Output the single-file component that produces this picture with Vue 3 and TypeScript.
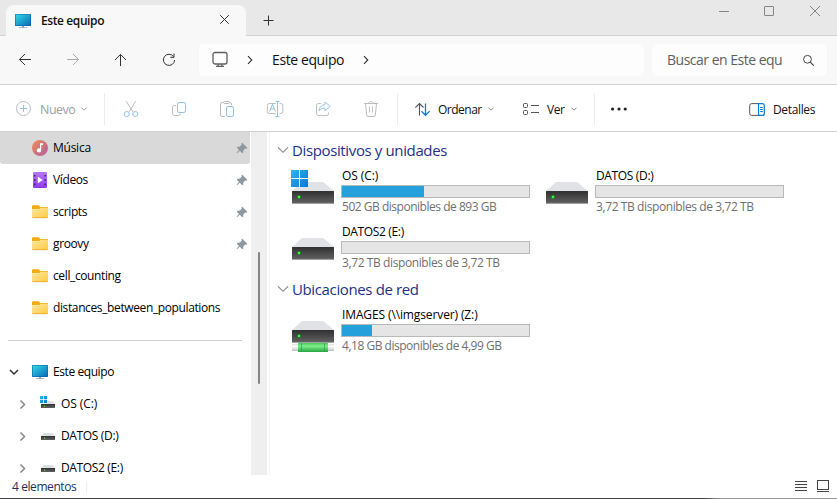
<script setup lang="ts">
interface Place { name: string; kind: 'music' | 'video' | 'folder'; pinned: boolean }
interface Drive { name: string; info: string; used: number; kind: 'os' | 'disk' | 'net' }
interface Group { title: string; drives: Drive[] }

const places: Place[] = [
  { name: 'Música', kind: 'music', pinned: true },
  { name: 'Vídeos', kind: 'video', pinned: true },
  { name: 'scripts', kind: 'folder', pinned: true },
  { name: 'groovy', kind: 'folder', pinned: true },
  { name: 'cell_counting', kind: 'folder', pinned: false },
  { name: 'distances_between_populations', kind: 'folder', pinned: false },
]
const tree = [
  { name: 'OS (C:)', os: true },
  { name: 'DATOS (D:)', os: false },
  { name: 'DATOS2 (E:)', os: false },
]
const groups: Group[] = [
  {
    title: 'Dispositivos y unidades',
    drives: [
      { name: 'OS (C:)', info: '502 GB disponibles de 893 GB', used: 43.8, kind: 'os' },
      { name: 'DATOS (D:)', info: '3,72 TB disponibles de 3,72 TB', used: 0, kind: 'disk' },
      { name: 'DATOS2 (E:)', info: '3,72 TB disponibles de 3,72 TB', used: 0, kind: 'disk' },
    ],
  },
  {
    title: 'Ubicaciones de red',
    drives: [{ name: 'IMAGES (\\\\imgserver) (Z:)', info: '4,18 GB disponibles de 4,99 GB', used: 16.2, kind: 'net' }],
  },
]
</script>

<template>
  <div class="window">
    <svg class="defs" width="0" height="0">
      <defs>
        <linearGradient id="screen" x1="0" y1="0" x2="1" y2="1"><stop offset="0" stop-color="#32dbe5" /><stop offset="1" stop-color="#0869b9" /></linearGradient>
        <linearGradient id="folder" x1="0" y1="0" x2="1" y2="1"><stop offset="0" stop-color="#ffe8a2" /><stop offset="1" stop-color="#ffca3d" /></linearGradient>
        <linearGradient id="music" x1="0" y1="0" x2="1" y2="1"><stop offset="0" stop-color="#f08a50" /><stop offset="1" stop-color="#ae62a5" /></linearGradient>
        <linearGradient id="video" x1="0" y1="0" x2="0" y2="1"><stop offset="0" stop-color="#b779ef" /><stop offset="1" stop-color="#8c3ce8" /></linearGradient>
        <linearGradient id="front" x1="0" y1="0" x2="0" y2="1"><stop offset="0" stop-color="#303030" /><stop offset="1" stop-color="#626262" /></linearGradient>
        <linearGradient id="win" x1="0" y1="0" x2="1" y2="1"><stop offset="0" stop-color="#30b3ee" /><stop offset="1" stop-color="#0878d3" /></linearGradient>
        <linearGradient id="pipe" x1="0" y1="0" x2="0" y2="1"><stop offset="0" stop-color="#47ca5b" /><stop offset=".35" stop-color="#7fee8a" /><stop offset="1" stop-color="#25a542" /></linearGradient>
        <linearGradient id="cap" x1="0" y1="0" x2="0" y2="1"><stop offset="0" stop-color="#dedede" /><stop offset=".35" stop-color="#fff" /><stop offset="1" stop-color="#bdbdbd" /></linearGradient>
        <symbol id="monitor" viewBox="0 0 16 16"><path d="M7 12h2v3H7zM4 14.2h8v.8H4z" fill="#9aa6ae" /><rect y="1" width="16" height="12" rx=".7" fill="#0b65a6" /><rect x=".6" y="1.5" width="14.8" height="10.9" fill="url(#screen)" /></symbol>
        <symbol id="pin" viewBox="0 0 12 12"><path d="M6.2.7 11.3 5.8 10.6 6.8 9.3 6.5 7.3 8.5 7.2 10.4 6.2 11.2 3.8 8.7 1 11.2.5 10.8 3 7.9.8 5.7 1.7 4.7 3.6 4.8 5.6 2.8 5.3 1.4z" fill="#8c979f" /></symbol>
        <symbol id="small-chevron" viewBox="0 0 8 8"><path d="M1.5 2.7 4 5.2 6.5 2.7" fill="none" stroke="currentColor" /></symbol>
      </defs>
    </svg>

    <header class="titlebar">
      <div class="tab">
        <svg width="16" height="16"><use href="#monitor" /></svg>
        <span class="tab-title">Este equipo</span>
        <svg class="tab-close" width="11" height="11" viewBox="0 0 11 11"><path d="M1.2 1.2 9.8 9.8M9.8 1.2 1.2 9.8" fill="none" stroke="#333" /></svg>
      </div>
      <svg class="new-tab" width="11" height="11" viewBox="0 0 11 11"><path d="M5.5.5v10M.5 5.5h10" stroke="#333" /></svg>
      <div class="caption">
        <svg width="12" height="12" viewBox="0 0 12 12"><path d="M1 6.5h10" stroke="#858585" /></svg>
        <svg width="12" height="12" viewBox="0 0 12 12"><rect x="1.5" y="1.5" width="9" height="9" rx=".5" fill="none" stroke="#858585" /></svg>
        <svg width="12" height="12" viewBox="0 0 12 12"><path d="m1 1 10 10M11 1 1 11" stroke="#858585" /></svg>
      </div>
    </header>

    <nav class="navbar">
      <div class="nav-buttons">
        <svg width="16" height="16" viewBox="0 0 16 16"><path d="M14 7.5H2.5M8 2 2.4 7.5 8 13" /></svg>
        <svg class="faded" width="16" height="16" viewBox="0 0 16 16"><path d="M2 7.5h11.5M8 2l5.6 5.5L8 13" /></svg>
        <svg width="16" height="16" viewBox="0 0 16 16"><path d="M7.5 14V2.5M2 8l5.5-5.6L13 8" /></svg>
        <svg width="16" height="16" viewBox="0 0 16 16"><path d="M12.5 4.5A5.6 5.6 0 1 0 13.6 8M13 1.5v3.8H9.3" /></svg>
      </div>
      <div class="address">
        <svg width="18" height="18" viewBox="0 0 18 18" fill="none" stroke="#5f5f5f" stroke-width="1.3"><rect x="2" y="1.5" width="14" height="11.5" rx="2" /><path d="M7.2 13.2v2M10.8 13.2v2M5 15.3h8" /></svg>
        <svg class="crumb-arrow" width="8" height="10" viewBox="0 0 8 10"><path d="m2 1.2 3.8 3.8L2 8.8" /></svg>
        <span class="crumb">Este equipo</span>
        <svg width="8" height="10" viewBox="0 0 8 10"><path d="m2 1.2 3.8 3.8L2 8.8" fill="none" stroke="#333" stroke-width="1.1" /></svg>
      </div>
      <div class="search">
        <span>Buscar en Este equ</span>
        <svg width="13" height="13" viewBox="0 0 13 13" fill="none" stroke="#444"><circle cx="5.5" cy="5.3" r="3.9" /><path d="m8.3 8.2 3.4 3.4" stroke-width="1.2" /></svg>
      </div>
    </nav>

    <div class="toolbar">
      <div class="new-item">
        <svg width="16" height="16" viewBox="0 0 16 16" fill="none"><circle cx="7.5" cy="7.5" r="7" stroke="#bdbdbd" /><path d="M7.5 4v7M4 7.5h7" stroke="#91c2e9" /></svg>
        <span>Nuevo</span>
        <svg width="8" height="8"><use href="#small-chevron" /></svg>
      </div>
      <div class="actions">
        <svg width="18" height="18" viewBox="0 0 18 18" fill="none"><path d="m4.2 1.2 7 11M13.8 1.2l-7 11" stroke="#bdbdbd" /><circle cx="4.7" cy="14" r="2.5" stroke="#91c2e9" /><circle cx="13.3" cy="14" r="2.5" stroke="#91c2e9" /></svg>
        <svg width="18" height="18" viewBox="-1 0 18 18" fill="none"><path d="M5 5.5H3.5a2 2 0 0 0-2 2v6a2 2 0 0 0 2 2h4a2 2 0 0 0 2-1.8" stroke="#bdbdbd" /><rect x="6.5" y="2.5" width="8" height="10" rx="1.7" stroke="#91c2e9" /></svg>
        <svg width="18" height="18" viewBox="-1 0 18 18" fill="none"><path d="M6 16.5H3A1.5 1.5 0 0 1 1.5 15V4A1.5 1.5 0 0 1 3 2.5h1.5m6 0H11A1.5 1.5 0 0 1 12.5 4v1" stroke="#bdbdbd" /><path d="M5.3 1.5h4.4l.8.7v.7l-.8.6H5.3l-.8-.6v-.7z" stroke="#bdbdbd" /><rect x="7.5" y="6.5" width="7" height="10" rx="1.5" stroke="#91c2e9" /></svg>
        <svg width="18" height="18" viewBox="0 0 18 18" fill="none"><path d="M9.5 3.5H3.3A2 2 0 0 0 1.3 5.5v6a2 2 0 0 0 2 2h6.2M13.5 3.5h1.3a2 2 0 0 1 2 2v6a2 2 0 0 1-2 2h-1.3" stroke="#bdbdbd" /><path d="M9.5 1.5h4M11.5 1.5v15M9.5 16.5h4M3.5 11.5l3-7 3 7M4.6 9h3.8" stroke="#91c2e9" /></svg>
        <svg width="18" height="18" viewBox="-1 0 18 18" fill="none"><path d="M6 3.5H3.5a2 2 0 0 0-2 2v8a2 2 0 0 0 2 2h8a2 2 0 0 0 2-2v-1" stroke="#bdbdbd" /><path d="m10 2 5.2 4.4-5.2 4.4V8.2C7.2 8 5.4 8.9 4 11 4.2 7.3 6.2 5 10 4.7z" stroke="#91c2e9" /></svg>
        <svg width="18" height="18" viewBox="0 0 18 18" fill="none" stroke="#bdbdbd"><path d="M2 3.5h14M6.7 3.5c0-2.6 4.6-2.6 4.6 0M3.5 3.5l1.2 11.9q.1 1.1 1.2 1.1h6.2q1.1 0 1.2-1.1l1.2-11.9M7.5 6.5v6M10.5 6.5v6" /></svg>
      </div>
      <div class="sort">
        <svg width="17" height="15" viewBox="0 0 17 15" fill="none"><path d="M5.5 13.5v-12M1.3 5.7l4.2-4.2 4 4" stroke="#555" stroke-width="1.1" /><path d="M11.5 1.5v12M7.5 9.3l4 4 4.2-4.2" stroke="#1579ce" stroke-width="1.3" /></svg>
        <span class="sort-label">Ordenar</span>
        <svg width="8" height="8"><use href="#small-chevron" /></svg>
        <svg class="view-icon" width="18" height="14" viewBox="0 0 18 14" fill="none" stroke="#555"><rect x="1.5" y="1.5" width="4" height="4" rx="1" /><rect x="1.5" y="8.5" width="4" height="4" rx="1" /><path d="M9 3.5h8M9 10.5h8" /></svg>
        <span class="view-label">Ver</span>
        <svg width="8" height="8"><use href="#small-chevron" /></svg>
      </div>
      <svg class="more" width="18" height="6" viewBox="0 0 18 6" fill="#222"><circle cx="2.6" cy="3" r="1.6" /><circle cx="9" cy="3" r="1.6" /><circle cx="15.2" cy="3" r="1.6" /></svg>
      <div class="details">
        <svg width="16" height="13" viewBox="0 0 16 13" fill="none"><path d="M9.5.6H2.7a2 2 0 0 0-2 2v7.8a2 2 0 0 0 2 2h6.8" stroke="#555" /><path d="M9.5.6h3.8a2 2 0 0 1 2 2v7.8a2 2 0 0 1-2 2H9.5z" stroke="#087bd4" stroke-width="1.2" /><path d="M11.2 4.5h2.6M11.2 6.5h2.6M11.2 8.5h2.6" stroke="#087bd4" /></svg>
        <span>Detalles</span>
      </div>
    </div>

    <div class="body">
      <aside class="sidebar">
        <div v-for="(p, i) in places" :key="p.name" class="place" :class="{ selected: i === 0 }">
          <svg v-if="p.kind === 'music'" width="16" height="16" viewBox="0 0 16 16"><circle cx="8" cy="8" r="8" fill="url(#music)" /><path d="M8 3.2h3v1.9H9.2v5.3a2.2 2 0 1 1-1.2-1.8z" fill="#fff" /></svg>
          <svg v-else-if="p.kind === 'video'" width="16" height="16" viewBox="0 0 16 16"><rect x="1" width="14" height="16" rx="1" fill="url(#video)" /><path d="M2 3h1.5v1.5H2zM2 7.3h1.5v1.5H2zM2 11.6h1.5v1.5H2zM12.5 3H14v1.5h-1.5zM12.5 7.3H14v1.5h-1.5zM12.5 11.6H14v1.5h-1.5z" fill="#402064" /><path d="m5.8 4.7 5 3.3-5 3.3z" fill="#fff" /></svg>
          <svg v-else width="16" height="16" viewBox="0 0 16 16"><path d="M0 2q0-.8.8-.8h6.1L8.2 3H16v2H0z" fill="#f3ad0b" /><path d="M0 5.3h7l1.4-1.5H16V13q0 1-1 1H1q-1 0-1-1z" fill="url(#folder)" /><path d="M.3 13.7h15.4" stroke="#d99b18" stroke-width=".6" /></svg>
          <span class="place-name">{{ p.name }}</span>
          <svg v-if="p.pinned" class="pin" width="12" height="12"><use href="#pin" /></svg>
        </div>
        <div class="separator"></div>
        <div class="tree-root">
          <svg width="12" height="12" viewBox="0 0 12 12"><path d="m2 4 4 4 4-4" fill="none" stroke="#333" stroke-width="1.5" /></svg>
          <svg class="root-icon" width="16" height="16"><use href="#monitor" /></svg>
          <span>Este equipo</span>
        </div>
        <div v-for="t in tree" :key="t.name" class="tree-item">
          <svg width="12" height="12" viewBox="0 0 12 12"><path d="m4.5 2.5 4 4-4 4" fill="none" stroke="#858585" stroke-width="1.5" /></svg>
          <svg class="tree-icon" width="16" height="16" viewBox="0 0 16 16"><path d="M4 5h8l3 3H1z" fill="#dedfe2" /><path d="M1 8h14v4H1z" fill="url(#front)" /><path d="M4 9.5h1.2v1.2H4z" fill="#47e04b" /><path v-if="t.os" d="M0 0h7.5v7.5H0z" fill="#fff" /><path v-if="t.os" d="M0 0h3.2v3.2H0zM3.9 0h3.2v3.2H3.9zM0 3.9h3.2v3.2H0zM3.9 3.9h3.2v3.2H3.9z" fill="url(#win)" /></svg>
          <span :class="{ wide: t.os }">{{ t.name }}</span>
        </div>
      </aside>
      <div class="scrollbar"><div class="thumb"></div></div>
      <main class="content">
        <section v-for="g in groups" :key="g.title">
          <h2><svg width="12" height="12" viewBox="0 0 12 12"><path d="m1 3.3 5 5 5-5" fill="none" stroke="#858585" stroke-width="1.1" /></svg><span>{{ g.title }}</span></h2>
          <div class="tiles">
            <div v-for="d in g.drives" :key="d.name" class="tile">
              <svg class="drive-icon" width="44" height="48" viewBox="0 0 44 48">
                <path d="M11 14h21l11 9H1z" fill="#e0e2e6" /><rect x="1" y="23" width="42" height="12.5" rx=".5" fill="url(#front)" /><path d="M1 35.4h42" stroke="#999" stroke-width=".8" />
                <circle cx="8" cy="29" r="2" fill="#158d28" /><circle cx="8" cy="29" r="1.2" fill="#45f047" />
                <g v-if="d.kind === 'os'"><path d="M0 2h17v17H0z" fill="#f8fcff" /><path d="M0 2h8v8H0zM9 2h8v8H9zM0 11h8v8H0zM9 11h8v8H9z" fill="url(#win)" /></g>
                <g v-if="d.kind === 'net'"><rect x="1" y="37" width="42" height="7" fill="url(#cap)" /><rect x="7" y="36" width="30" height="9" fill="url(#pipe)" /><path d="M10.5 36v9M33.5 36v9" stroke="#239b3a" stroke-width=".6" /></g>
              </svg>
              <div class="drive-info">
                <span class="drive-name" :class="d.kind">{{ d.name }}</span>
                <div class="meter"><div v-if="d.used" class="used" :style="{ width: d.used + '%' }"></div></div>
                <span class="drive-space" :class="d.kind">{{ d.info }}</span>
              </div>
            </div>
          </div>
        </section>
      </main>
    </div>
    <footer class="status">
      <span>4 elementos</span><i></i>
      <svg class="modes" width="38" height="14" viewBox="0 0 38 14" fill="none" stroke="#444"><path d="M0 1.5h12M0 4.5h12M0 7.5h12M0 10.5h12" /><rect x="22.5" y=".5" width="11" height="9" /><path d="M22 11.5h12" /></svg>
    </footer>
  </div>
</template>

<style>
body { background: #fff; }
</style>
<style scoped>
* { box-sizing: border-box; }
svg { display: block; flex: none; }
.window { width: 837px; height: 499px; overflow: hidden; display: flex; flex-direction: column; font: 12px/16px "Open Sans", "Noto Sans", sans-serif; color: #111; letter-spacing: -.35px; white-space: nowrap; background: #fff; }
.defs { height: 0; }
.titlebar { height: 36px; flex: none; display: flex; background: linear-gradient(#d3d3d3, #d3d3d3) 0 35px / 100% 1px no-repeat #e8e8e8; }
.tab { margin: 5px 0 0 6px; width: 240px; height: 31px; background: #f8f8f8; border-radius: 8px 8px 0 0; padding: 0 16px 0 9px; display: flex; align-items: center; }
.tab-title { margin-left: 10px; font-weight: 600; letter-spacing: -.4px; }
.tab-close { margin-left: auto; position: relative; top: -1px; }
.new-tab { margin: 15px 0 0 17px; }
.caption { margin: 5px 16px 0 auto; display: flex; gap: 33px; }
.caption svg:last-child { margin-left: 1px; }
.navbar { height: 49px; flex: none; background: #f8f8f8; border-bottom: 1px solid #d1d1d1; display: flex; align-items: center; }
.nav-buttons { width: 199px; padding-left: 17px; display: flex; gap: 32px; fill: none; stroke: #333; stroke-width: 1; }
.faded { stroke: #aaa; }
.address { width: 445px; height: 32px; border-radius: 5px; background: #fdfdfd; padding-left: 12px; display: flex; align-items: center; font-size: 14px; }
.crumb-arrow { margin-left: 17px; fill: none; stroke: #333; stroke-width: 1.1; }
.crumb { width: 73px; margin: 0 17px 0 18px; letter-spacing: -.4px; }
.search { width: 175px; height: 32px; margin-left: 8px; border-radius: 5px; background: #fdfdfd; padding: 0 12px 0 15px; display: flex; align-items: center; justify-content: space-between; color: #606060; font-size: 14px; letter-spacing: -.5px; }
.toolbar { height: 47px; flex: none; border-bottom: 1px solid #d1d1d1; display: flex; align-items: center; padding-top: 2px; }
.new-item { width: 105px; height: 32px; padding-left: 16px; border-right: 1px solid #ececec; display: flex; align-items: center; color: #a0a0a0; }
.new-item span { width: 35px; margin: 0 5px 0 8px; font-size: 12.5px; letter-spacing: -.5px; position: relative; top: 1px; }
.actions { width: 293px; height: 32px; display: flex; align-items: center; gap: 30px; padding-left: 17px; border-right: 1px solid #ececec; }
.sort { width: 197px; height: 32px; display: flex; align-items: center; padding-left: 16px; border-right: 1px solid #ececec; }
.sort > svg:nth-of-type(2), .sort > svg:last-child { color: #888; }
.sort-label, .view-label, .details span { position: relative; top: 1px; }
.sort-label { width: 44px; margin: 0 5px 0 7px; letter-spacing: -.5px; }
.view-icon { margin-left: 27px; }
.view-label { width: 18px; margin: 0 5px 0 7px; letter-spacing: -.5px; }
.more { margin-left: 15px; }
.details { margin-left: auto; padding-right: 21px; display: flex; align-items: center; }
.details span { width: 43px; margin-left: 8px; }
.body { flex: none; height: 343px; display: flex; }
.sidebar { width: 251px; overflow: hidden; color: #000; }
.place { height: 32px; width: 250px; display: flex; align-items: center; padding: 0 2px 0 32px; border-radius: 0 0 3px 3px; }
.selected { background: #d9d9d9; }
.place-name { margin-left: 5px; letter-spacing: -.38px; }
.selected .place-name { letter-spacing: -.25px; }
.pin { margin-left: auto; }
.separator { height: 32px; margin: 0 9px 0 8px; background: linear-gradient(#d1d1d1, #d1d1d1) 0 16px / 100% 1px no-repeat; }
.tree-root, .tree-item { height: 32px; display: flex; align-items: center; padding-left: 8px; }
.tree-root span { letter-spacing: -.42px; }
.root-icon { margin: 0 5px 0 12px; }
.tree-item { padding-left: 16px; }
.tree-item .wide { letter-spacing: -.1px; }
.tree-icon { margin: 0 5px 0 12px; }
.scrollbar { width: 16px; background: #efefef; padding: 120px 6px 0 7px; }
.thumb { height: 132px; background: #858585; border-radius: 2px; width: 2px; }
.content { flex: 1; margin-left: 2px; border-left: 1px solid #f3f3f3; padding: 7px 0 0 7px; }
h2 { height: 22px; margin: 0 0 6px; display: flex; align-items: center; font-size: 15px; line-height: 20px; font-weight: 400; letter-spacing: -.37px; color: #1d3287; }
h2 span { margin-left: 3px; }
.tiles { display: grid; grid-template-columns: 254px 254px; grid-auto-rows: 56px; padding-left: 14px; }
section:first-child .tiles { height: 111px; }
.tile { display: flex; }
.drive-icon { margin-top: 1px; }
.drive-info { width: 189px; margin-left: 6px; padding-top: 1px; }
.drive-name, .drive-space { display: block; height: 17px; line-height: 16px; padding-left: 1px; }
.drive-name { color: #000; }
.drive-name.os { letter-spacing: -.1px; }
.drive-name.net { letter-spacing: -.12px; }
.meter { height: 13px; border: 1px solid #b9b9b9; background: #e5e5e5; }
.used { height: 100%; background: #26a0da; }
.drive-space { color: #707070; margin-top: 1px; letter-spacing: -.4px; }
.drive-space.os, .drive-space.net { letter-spacing: -.48px; }
.status { flex: none; height: 24px; border-bottom: 1px solid; border-image: linear-gradient(90deg, #444 84%, #999 86%) 1; display: flex; align-items: center; padding-left: 12px; color: #1c3159; letter-spacing: -.42px; }
.status i { width: 1px; height: 12px; background: #eee; margin-left: 10px; }
.modes { margin-left: auto; margin-right: 4px; }
</style>
